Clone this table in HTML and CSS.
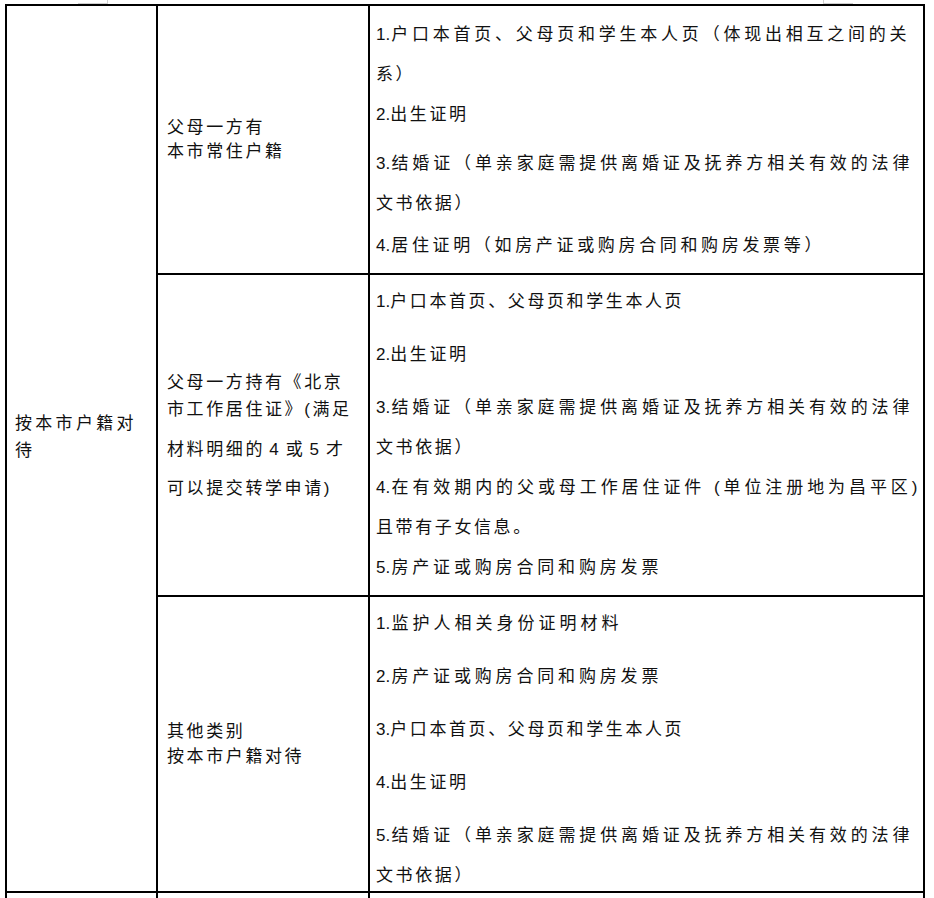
FILE: index.html
```html
<!DOCTYPE html>
<html lang="zh-CN">
<head>
<meta charset="utf-8">
<title>转学材料明细</title>
<link rel="stylesheet" href="styles.css">
</head>
<body>
<div class="marks"><span class="mark mark-l"></span><span class="mark mark-r"></span></div>
<div class="sheet">
  <div class="cell cat"><p class="txt">按本市户籍对<br>待</p></div>

  <div class="cell kind"><p class="txt lh24">父母一方有<br>本市常住户籍</p></div>
  <div class="cell docs">
    <p class="para"><span class="ln fill w533"><span class="n">1.</span>户口本首页、父母页和学生本人页（体现出相互之间的关</span><span class="ln">系）</span></p>
    <p class="para"><span class="n">2.</span>出生证明</p>
    <p class="para gap-sm"><span class="ln fill w536"><span class="n">3.</span>结婚证（单亲家庭需提供离婚证及抚养方相关有效的法律</span><span class="ln">文书依据）</span></p>
    <p class="para gap-xs"><span class="ln fill w448"><span class="n">4.</span>居住证明（如房产证或购房合同和购房发票等）</span></p>
  </div>

  <div class="cell kind"><div class="txt">
    <p class="kl">父母一方持有《北京</p>
    <p class="kl">市工作居住证》(满足</p>
    <p class="kl kl-gap1 nums">材料明细的 4 或 5 才</p>
    <p class="kl kl-gap2">可以提交转学申请)</p>
  </div></div>
  <div class="cell docs docs-b">
    <p class="para"><span class="n">1.</span>户口本首页、父母页和学生本人页</p>
    <p class="para gap"><span class="n">2.</span>出生证明</p>
    <p class="para gap"><span class="ln fill w536"><span class="n">3.</span>结婚证（单亲家庭需提供离婚证及抚养方相关有效的法律</span><span class="ln">文书依据）</span></p>
    <p class="para"><span class="ln fill w544"><span class="n">4.</span>在有效期内的父或母工作居住证件 (单位注册地为昌平区)</span><span class="ln">且带有子女信息。</span></p>
    <p class="para"><span class="ln fill w285"><span class="n">5.</span>房产证或购房合同和购房发票</span></p>
  </div>

  <div class="cell kind"><p class="txt lh25">其他类别<br>按本市户籍对待</p></div>
  <div class="cell docs docs-b">
    <p class="para"><span class="ln fill w245"><span class="n">1.</span>监护人相关身份证明材料</span></p>
    <p class="para gap"><span class="ln fill w285"><span class="n">2.</span>房产证或购房合同和购房发票</span></p>
    <p class="para gap"><span class="n">3.</span>户口本首页、父母页和学生本人页</p>
    <p class="para gap"><span class="n">4.</span>出生证明</p>
    <p class="para gap"><span class="ln fill w536"><span class="n">5.</span>结婚证（单亲家庭需提供离婚证及抚养方相关有效的法律</span><span class="ln">文书依据）</span></p>
  </div>

  <div class="cell"></div>
  <div class="cell"></div>
  <div class="cell"></div>
</div>
</body>
</html>
```

FILE: styles.css
```css
html, body {
  margin: 0;
  padding: 0;
  background: #fff;
  overflow: hidden;
}

body {
  font-family: "Liberation Sans", "Noto Sans CJK SC", sans-serif;
  color: #111;
}

p {
  margin: 0;
}

/* faint crop marks above the table */
.marks {
  display: flex;
  justify-content: space-between;
  height: 4px;
  padding: 0 81px 0 78px;
}

.mark {
  display: block;
  width: 30px;
  height: 4px;
  box-sizing: border-box;
  border-bottom: 1px solid #cfcfcf;
}

.mark-l {
  border-right: 1px solid #cfcfcf;
}

.mark-r {
  border-left: 1px solid #cfcfcf;
}

/* table */
.sheet {
  display: grid;
  grid-template-columns: 151px 212px 555px;
  grid-template-rows: 269px 322px 296px 40px;
  width: max-content;
  margin-left: 5px;
  border-left: 2px solid #000;
  border-top: 2px solid #000;
}

.cell {
  border-right: 2px solid #000;
  border-bottom: 2px solid #000;
  min-width: 0;
}

.cat {
  grid-row: 1 / 4;
  display: flex;
  align-items: center;
  padding: 0 0 24px 8px;
  font-size: 17px;
  letter-spacing: 3.3px;
  line-height: 27px;
}

.kind {
  display: flex;
  align-items: center;
  padding-left: 9px;
  font-size: 17px;
  letter-spacing: 2.6px;
  line-height: 27px;
}

.lh24 {
  line-height: 24px;
}

.lh25 {
  line-height: 25px;
}

.kl {
  line-height: 27px;
  white-space: nowrap;
}

.kl-gap1 {
  margin-top: 13px;
}

.kl-gap2 {
  margin-top: 12px;
}

.nums {
  word-spacing: -3px;
}

.docs {
  padding: 9px 0 0 6px;
  font-size: 17px;
  letter-spacing: 2.6px;
}

.docs-b {
  padding-top: 7px;
}

.n {
  letter-spacing: 0;
}

.para {
  line-height: 40px;
}

.gap {
  margin-top: 13px;
}

.gap-sm {
  margin-top: 9px;
}

.gap-xs {
  margin-top: 2px;
}

.ln {
  display: block;
}

.fill {
  text-align: justify;
  text-align-last: justify;
}

.w245 {
  width: 245px;
}

.w285 {
  width: 285px;
}

.w448 {
  width: 448px;
}

.w533 {
  width: 533px;
}

.w536 {
  width: 536px;
}

.w544 {
  width: 544px;
}
```
